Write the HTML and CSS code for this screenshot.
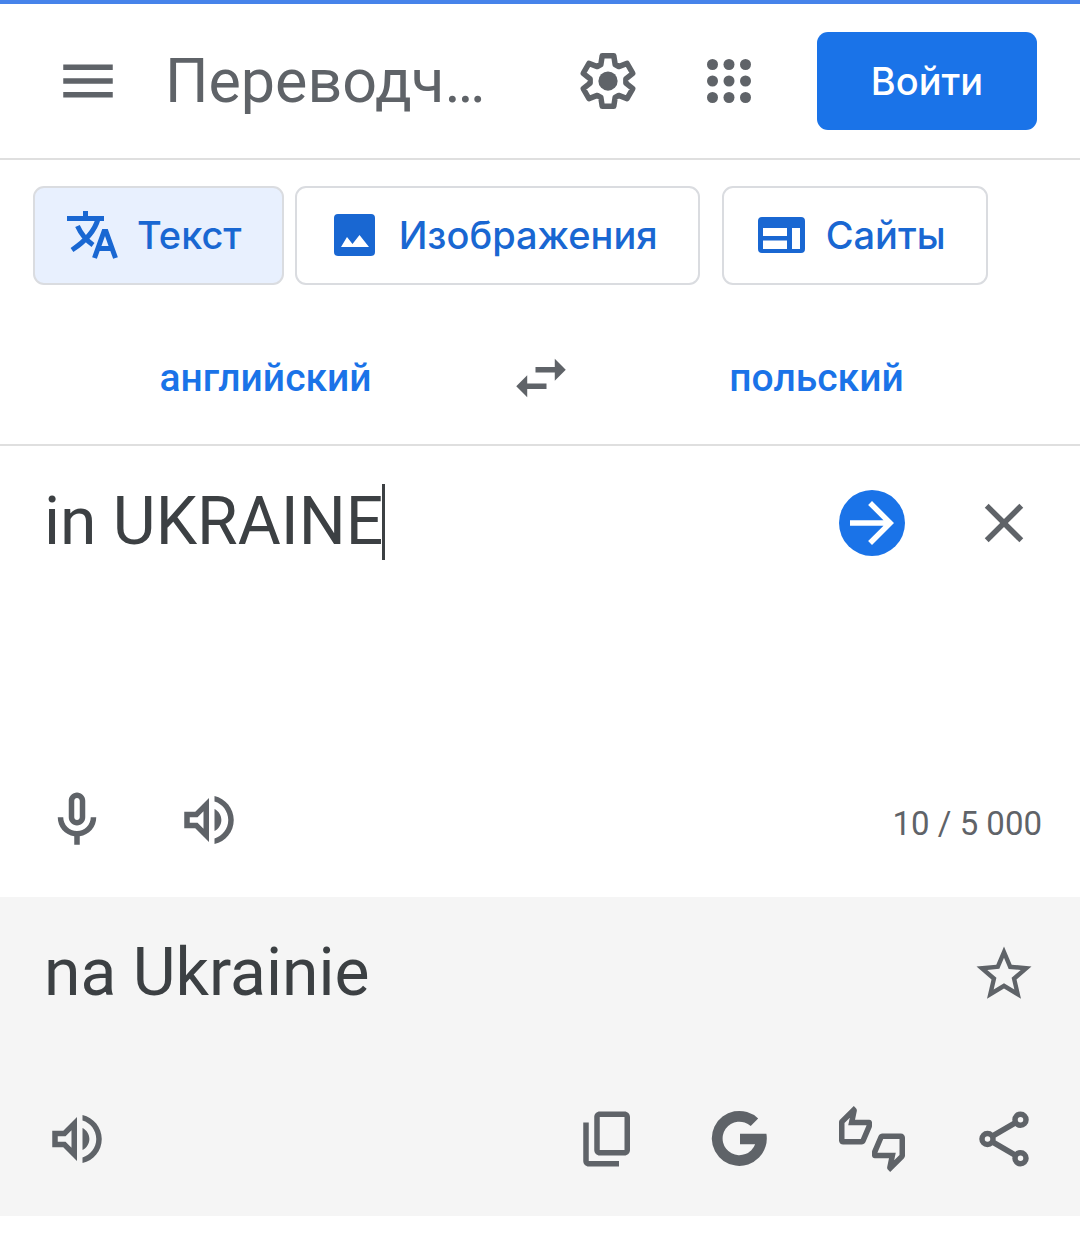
FILE: index.html
```html
<!DOCTYPE html>
<html lang="ru">
<head>
  <meta charset="UTF-8" />
  <meta name="viewport" content="width=device-width, initial-scale=1.0" />
  <title>Переводчик</title>
  <link rel="stylesheet" href="styles.css">
</head>
<body>

  <header class="topbar">
    <button class="icon-btn" aria-label="Меню">
      <svg class="icon" viewBox="0 0 24 24"><path d="M3 18h18v-2H3v2zm0-5h18v-2H3v2zm0-7v2h18V6H3z"/></svg>
    </button>
    <h1 class="title">Переводч…</h1>
    <div class="topbar-actions">
      <button class="icon-btn" aria-label="Настройки">
        <svg class="icon" viewBox="-12 -12 24 24">
          <path class="line" d="M-2.6-6L-2.1-9.2H2.1L2.6-6L3.9-5.25L6.92-6.42L9.02-2.78L6.5-.75V.75L9.02 2.78L6.92 6.42L3.9 5.25L2.6 6L2.1 9.2H-2.1L-2.6 6L-3.9 5.25L-6.92 6.42L-9.02 2.78L-6.5 .75V-.75L-9.02-2.78L-6.92-6.42L-3.9-5.25z"/>
          <circle r="3.5"/>
        </svg>
      </button>
      <button class="icon-btn" aria-label="Приложения">
        <svg class="icon" viewBox="0 0 24 24">
          <circle cx="6" cy="6" r="2"/><circle cx="12" cy="6" r="2"/><circle cx="18" cy="6" r="2"/>
          <circle cx="6" cy="12" r="2"/><circle cx="12" cy="12" r="2"/><circle cx="18" cy="12" r="2"/>
          <circle cx="6" cy="18" r="2"/><circle cx="12" cy="18" r="2"/><circle cx="18" cy="18" r="2"/>
        </svg>
      </button>
      <button class="login">Войти</button>
    </div>
  </header>

  <nav class="tabs">
    <button class="tab active">
      <svg class="tab-icon" viewBox="0 0 52 48">
        <path class="stroke" d="M0 7.5H37M18.5 0V7M31 8C28 19 20 29 5 39M10.5 15C14 23 19 29 26 34"/>
        <path class="stroke" d="M27.5 47L37 20.5H39L48.5 47M31 37.5H45"/>
      </svg>
      <span>Текст</span>
    </button>
    <button class="tab tab-images">
      <svg class="tab-icon" viewBox="0 0 52 48">
        <path fill-rule="evenodd" d="M9 3H42a4 4 0 0 1 4 4V41a4 4 0 0 1-4 4H9a4 4 0 0 1-4-4V7a4 4 0 0 1 4-4zM12 36H40L30.5 24L23.5 33L18 26z"/>
      </svg>
      <span>Изображения</span>
    </button>
    <button class="tab">
      <svg class="tab-icon" viewBox="0 0 52 48">
        <path fill-rule="evenodd" d="M6 6H45a4 4 0 0 1 4 4V38a4 4 0 0 1-4 4H6a4 4 0 0 1-4-4V10a4 4 0 0 1 4-4zM7 17V25H31V17zM7 29.5V38H31V29.5zM36 17V38H44V17z"/>
      </svg>
      <span>Сайты</span>
    </button>
  </nav>

  <div class="languages">
    <button class="lang">английский</button>
    <button class="icon-btn" aria-label="Поменять языки местами">
      <svg class="icon" viewBox="0 0 24 24"><path d="M6.99 11L3 15l3.99 4v-3H14v-2H6.99v-3zM21 9l-3.99-4v3H10v2h7.01v3L21 9z"/></svg>
    </button>
    <button class="lang">польский</button>
  </div>

  <main>
    <section class="source">
      <div class="row">
        <div class="source-box">
          <textarea class="source-text" aria-label="Исходный текст" spellcheck="false">in UKRAINE</textarea>
          <span class="caret"></span>
        </div>
        <div class="actions">
          <button class="icon-btn go" aria-label="Перевести">
            <svg class="icon" viewBox="0 0 24 24"><path d="M12 4l-1.41 1.41L16.17 11H4v2h12.17l-5.58 5.59L12 20l8-8-8-8z"/></svg>
          </button>
          <button class="icon-btn" aria-label="Очистить">
            <svg class="icon" viewBox="0 0 24 24"><path d="M19 6.41L17.59 5 12 10.59 6.41 5 5 6.41 10.59 12 5 17.59 6.41 19 12 13.41 17.59 19 19 17.59 13.41 12z"/></svg>
          </button>
        </div>
      </div>
      <div class="tools">
        <button class="icon-btn" aria-label="Голосовой ввод">
          <svg class="icon" viewBox="0 0 24 24"><path d="M12 14c1.66 0 3-1.34 3-3V5c0-1.66-1.34-3-3-3S9 3.34 9 5v6c0 1.66 1.34 3 3 3zm-1-9c0-.55.45-1 1-1s1 .45 1 1v6c0 .55-.45 1-1 1s-1-.45-1-1V5zm6 6c0 2.76-2.24 5-5 5s-5-2.24-5-5H5c0 3.53 2.61 6.43 6 6.92V21h2v-3.08c3.39-.49 6-3.39 6-6.92h-2z"/></svg>
        </button>
        <button class="icon-btn" aria-label="Прослушать">
          <svg class="icon" viewBox="0 0 24 24"><path d="M3 9v6h4l5 5V4L7 9H3zm7-.17v6.34L7.83 13H5v-2h2.83L10 8.83zM16.5 12c0-1.77-1.02-3.29-2.5-4.03v8.05c1.48-.73 2.5-2.25 2.5-4.02zM14 3.23v2.06c2.89.86 5 3.54 5 6.71s-2.11 5.85-5 6.71v2.06c4.01-.91 7-4.49 7-8.77 0-4.28-2.99-7.86-7-8.77z"/></svg>
        </button>
        <span class="counter">10 / 5 000</span>
      </div>
    </section>

    <section class="result">
      <div class="row">
        <p class="result-text">na Ukrainie</p>
        <div class="actions">
          <button class="icon-btn" aria-label="Сохранить перевод">
            <svg class="icon" viewBox="0 0 24 24"><path d="M22 9.24l-7.19-.62L12 2 9.19 8.63 2 9.24l5.46 4.73L5.82 21 12 17.27 18.18 21l-1.63-7.03L22 9.24zM12 15.4l-3.76 2.27 1-4.28-3.32-2.88 4.38-.38L12 6.1l1.71 4.04 4.38.38-3.32 2.88 1 4.28L12 15.4z"/></svg>
          </button>
        </div>
      </div>
      <div class="tools">
        <button class="icon-btn push" aria-label="Прослушать перевод">
          <svg class="icon" viewBox="0 0 24 24"><path d="M3 9v6h4l5 5V4L7 9H3zm7-.17v6.34L7.83 13H5v-2h2.83L10 8.83zM16.5 12c0-1.77-1.02-3.29-2.5-4.03v8.05c1.48-.73 2.5-2.25 2.5-4.02zM14 3.23v2.06c2.89.86 5 3.54 5 6.71s-2.11 5.85-5 6.71v2.06c4.01-.91 7-4.49 7-8.77 0-4.28-2.99-7.86-7-8.77z"/></svg>
        </button>
        <button class="icon-btn" aria-label="Копировать">
          <svg class="icon" viewBox="0 0 24 24"><path d="M18 2H9c-1.1 0-2 .9-2 2v12c0 1.1.9 2 2 2h9c1.1 0 2-.9 2-2V4c0-1.1-.9-2-2-2zm0 14H9V4h9v12zM3 6h2v14h11v2H5c-1.1 0-2-.9-2-2z"/></svg>
        </button>
        <button class="icon-btn" aria-label="Найти в Google">
          <svg class="icon" viewBox="0 0 24 24"><path d="M18.6 4.5A10 10 0 1 0 21.6 10.1H12v3.8h5.5A6.1 6.1 0 1 1 15.9 7.3z"/></svg>
        </button>
        <button class="icon-btn" aria-label="Оценить перевод">
          <svg class="icon" viewBox="0 0 24 24"><path d="M12 6c0-.55-.45-1-1-1H5.82l.66-3.18.02-.23c0-.31-.13-.59-.33-.8L5.38 0 .44 4.94C.17 5.21 0 5.59 0 6v6.5c0 .83.67 1.5 1.5 1.5h6.75c.62 0 1.15-.38 1.38-.91l2.26-5.29c.07-.17.11-.36.11-.55V6zm-2 1.13L7.92 12H2V6.21l1.93-1.93L3.36 7H10v.13zM22.5 10h-6.75c-.62 0-1.15.38-1.38.91l-2.26 5.29c-.07.17-.11.36-.11.55V18c0 .55.45 1 1 1h5.18l-.66 3.18-.02.24c0 .31.13.59.33.8l.79.78 4.94-4.94c.27-.27.44-.65.44-1.06v-6.5c0-.83-.67-1.5-1.5-1.5zm-.5 7.79l-1.93 1.93.57-2.72H14v-.13L16.08 12H22v5.79z"/></svg>
        </button>
        <button class="icon-btn" aria-label="Поделиться">
          <svg class="icon" viewBox="0 0 24 24"><path class="line" d="M16.3 6L7.7 11M7.7 13L16.3 18"/><circle class="line" cx="6" cy="12" r="2"/><circle class="line" cx="18" cy="5" r="2"/><circle class="line" cx="18" cy="19" r="2"/></svg>
        </button>
      </div>
    </section>
  </main>

</body>
</html>
```
FILE: styles.css
```css
* {
  box-sizing: border-box;
}

body {
  margin: 0;
  border-top: 4px solid #4683ea;
  font-family: Roboto, sans-serif;
  background: #fff;
  color: #3c4043;
}

button {
  margin: 0;
  padding: 0;
  border: none;
  background: none;
  font-family: inherit;
  color: inherit;
  cursor: pointer;
}

.icon-btn {
  flex: none;
  width: 66px;
  height: 66px;
  color: #5f6368;
}

.icon {
  display: block;
  width: 66px;
  height: 66px;
  fill: currentColor;
}

.line {
  fill: none;
  stroke: currentColor;
  stroke-width: 2;
  stroke-linejoin: round;
}

/* header */
.topbar {
  display: flex;
  align-items: center;
  padding: 28px 43px 28px 55px;
  border-bottom: 2px solid #dfdfdf;
}

.title {
  flex: 1;
  margin: 0 0 0 44px;
  white-space: nowrap;
  font-size: 61px;
  line-height: 76px;
  font-weight: 400;
  color: #5f6368;
}

.topbar-actions {
  display: flex;
  align-items: center;
  gap: 55px;
}

.login {
  width: 220px;
  height: 98px;
  border-radius: 11px;
  background: #1a73e8;
  color: #fff;
  font-family: Inter, sans-serif;
  font-size: 38px;
  font-weight: 500;
}

/* tabs */
.tabs {
  display: flex;
  padding: 26px 33px 0;
  gap: 11px;
}

.tab {
  display: flex;
  align-items: center;
  gap: 18px;
  height: 99px;
  padding: 0 40px 2px 32px;
  border: 2px solid #dadce0;
  border-radius: 11px;
  color: #1967d2;
  font-family: Inter, sans-serif;
  font-size: 38px;
  font-weight: 500;
}

.tab.active {
  background: #e8f0fe;
}

.tab-images {
  margin-right: 11px;
}

.tab-icon {
  flex: none;
  width: 52px;
  height: 48px;
  fill: currentColor;
}

.stroke {
  fill: none;
  stroke: currentColor;
  stroke-width: 5;
}

/* languages */
.languages {
  display: flex;
  align-items: center;
  padding: 44px 21px 18px 23px;
  border-bottom: 2px solid #dfdfdf;
}

.lang {
  flex: 1;
  height: 97px;
  font-size: 39px;
  font-weight: 500;
  color: #1a73e8;
}

/* text panels */
.source,
.result {
  padding: 38px 43px 44px 44px;
}

.result {
  background: #f5f5f5;
}

.row {
  display: flex;
  align-items: flex-start;
}

.source-box {
  position: relative;
  flex: 1;
}

.source-text {
  display: block;
  width: 100%;
  height: 303px;
  margin: 0;
  padding: 0;
  border: none;
  outline: none;
  resize: none;
  overflow: hidden;
  background: none;
  font-family: inherit;
  font-size: 66px;
  line-height: 76px;
  color: #3c4043;
}

.caret {
  position: absolute;
  top: 0;
  left: 338px;
  width: 3px;
  height: 76px;
  background: #3c4043;
}

.actions {
  display: flex;
  gap: 66px;
  padding-top: 6px;
}

.go {
  border-radius: 50%;
  background: #1a73e8;
  color: #fff;
}

.tools {
  display: flex;
  align-items: center;
  gap: 66px;
}

.counter {
  margin: 0 -5px 0 auto;
  padding-top: 6px;
  font-size: 33px;
  color: #5f6368;
}

.result-text {
  flex: 1;
  margin: 0 0 95px;
  font-size: 66px;
  line-height: 76px;
}

.push {
  margin-right: auto;
}
```
